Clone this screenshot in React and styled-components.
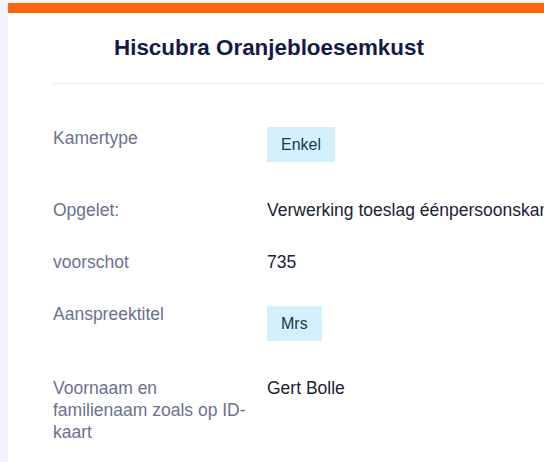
import React from 'react'
import styled, { createGlobalStyle } from 'styled-components';

const GlobalStyle = createGlobalStyle`
    html, body {
        margin: 0;
        padding: 0;
        background-color: #f3f3fc;
        overflow: hidden;
    }
`;

const Page = styled.div`
    width: 544px;
    height: 462px;
    padding: 3px 0 0 8px;
    box-sizing: border-box;
    font-family: "Liberation Sans", Arial, sans-serif;
`;

const Card = styled.div`
    width: 700px;
    min-height: 480px;
    background-color: #ffffff;
    border-top: 10px solid #ff660a;
    box-sizing: border-box;
`;

const Header = styled.div`
    margin-left: 44px;
    padding: 21px 0 0 62px;
    height: 71px;
    box-sizing: border-box;
    border-bottom: 1px solid #ececf0;
`;

const Title = styled.h1`
    margin: 0;
    font-size: 22.4px;
    font-weight: 700;
    line-height: 27px;
    color: #141a48;
`;

const List = styled.div`
    padding: 43px 0 0 45px;
    display: flex;
    flex-direction: column;
`;

const Row = styled.div`
    display: grid;
    grid-template-columns: 198px auto;
    column-gap: 16px;
    align-items: start;
    margin-top: ${p => p.$space || 0}px;
`;

const Label = styled.div`
    font-size: 17.5px;
    line-height: 22px;
    color: #6b7191;
`;

const Value = styled.div`
    font-size: 17.5px;
    line-height: 22px;
    color: #1b2235;
    white-space: nowrap;
`;

const Badge = styled.span`
    display: inline-block;
    margin-top: ${p => p.$offset || 0}px;
    padding: 7px 14px;
    font-size: 16px;
    line-height: 21px;
    background-color: #d3f0fc;
    color: #26344f;
`;

const rows = [
    { label: 'Kamertype', badge: 'Enkel', space: 0, offset: 0 },
    { label: 'Opgelet:', value: 'Verwerking toeslag éénpersoonskamer', space: 37 },
    { label: 'voorschot', value: '735', space: 30 },
    { label: 'Aanspreektitel', badge: 'Mrs', space: 30, offset: 3 },
    { label: 'Voornaam en familienaam zoals op ID-kaart', value: 'Gert Bolle', space: 36 },
];

const App = () => {
    return (
        <Page>
            <GlobalStyle />
            <Card>
                <Header>
                    <Title>Hiscubra Oranjebloesemkust</Title>
                </Header>
                <List>
                    {rows.map(r => (
                        <Row key={r.label} $space={r.space}>
                            <Label>{r.label}</Label>
                            {r.badge
                                ? <div><Badge $offset={r.offset}>{r.badge}</Badge></div>
                                : <Value>{r.value}</Value>}
                        </Row>
                    ))}
                </List>
            </Card>
        </Page>
    )
}

export default App
